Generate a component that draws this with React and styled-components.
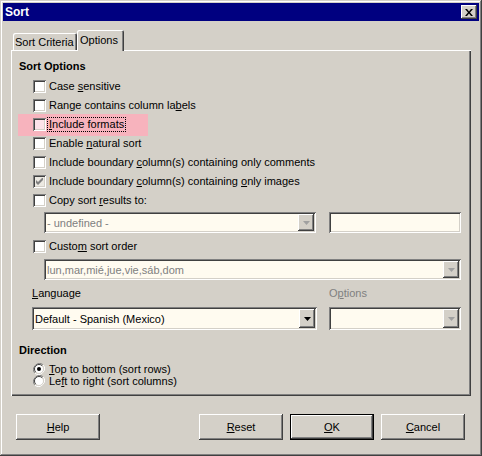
import React from "react";
import styled, { createGlobalStyle, css } from "styled-components";

const GlobalStyle = createGlobalStyle`
  body {
    margin: 0;
    background: #d4d0c8;
  }
  * {
    box-sizing: border-box;
  }
`;

const raised = css`
  box-shadow: inset -1px -1px #404040, inset 1px 1px #ffffff,
    inset -2px -2px #808080, inset 2px 2px #d4d0c8;
`;

const sunken = css`
  box-shadow: inset 1px 1px #808080, inset -1px -1px #ffffff,
    inset 2px 2px #404040, inset -2px -2px #d4d0c8;
`;

const Window = styled.div`
  width: 482px;
  height: 456px;
  padding: 3px;
  background: #d4d0c8;
  font-family: "Liberation Sans", Arial, sans-serif;
  font-size: 11px;
  color: #000;
  box-shadow: inset -1px -1px #404040, inset 1px 1px #d4d0c8,
    inset -2px -2px #808080, inset 2px 2px #ffffff;
  display: flex;
  flex-direction: column;
`;

const TitleBar = styled.div`
  height: 18px;
  background: #000080;
  display: flex;
  align-items: center;
  justify-content: space-between;
  padding: 0 2px 0 2px;
  color: #fff;
  font-weight: bold;
  font-size: 12px;
`;

const CloseButton = styled.div`
  width: 16px;
  height: 14px;
  background: #d4d0c8;
  display: flex;
  align-items: center;
  justify-content: center;
  ${raised}
`;

const Body = styled.div`
  padding: 0 8px;
  display: flex;
  flex-direction: column;
`;

const TabStrip = styled.div`
  margin-top: 9px;
  height: 20px;
  padding-left: 2px;
  display: flex;
  align-items: flex-end;
  position: relative;
  z-index: 1;
`;

const Tab = styled.div`
  height: ${(p) => (p.$active ? "21px" : "17px")};
  margin-bottom: ${(p) => (p.$active ? "-1px" : "0")};
  width: ${(p) => p.$w}px;
  background: #d4d0c8;
  border-radius: 2px 2px 0 0;
  display: flex;
  align-items: ${(p) => (p.$active ? "flex-start" : "center")};
  padding: ${(p) => (p.$active ? "4px 0 0 3px" : "0 0 0 2px")};
  box-shadow: inset 1px 1px #ffffff, inset -1px 0 #404040, inset -2px 0 #808080;
`;

const Panel = styled.div`
  height: 346px;
  padding: 10px 8px 0 8px;
  display: flex;
  flex-direction: column;
  box-shadow: inset 1px 1px #ffffff, inset -1px -1px #404040,
    inset -2px -2px #808080;
`;

const SectionTitle = styled.div`
  font-weight: bold;
  height: 13px;
  line-height: 13px;
  margin-top: ${(p) => p.$mt || 0}px;
`;

const CheckList = styled.div`
  margin-left: 14px;
  margin-top: 4px;
  display: flex;
  flex-direction: column;
`;

const CheckRow = styled.div`
  height: 19px;
  display: flex;
  align-items: center;
  gap: 3px;
  position: relative;
  margin-top: ${(p) => p.$mt || 0}px;

  ${(p) =>
    p.$highlight &&
    css`
      &::before {
        content: "";
        position: absolute;
        left: -15px;
        top: 0;
        width: 130px;
        height: 22px;
        margin-top: -1px;
        background: #f7b3bd;
        z-index: 0;
      }
    `}

  & > * {
    position: relative;
    z-index: 1;
  }
`;

const Box = styled.span`
  width: 13px;
  height: 13px;
  flex: none;
  background: ${(p) => p.$bg || "#ffffff"};
  display: flex;
  align-items: center;
  justify-content: center;
  ${sunken}
`;

const Label = styled.span`
  line-height: 13px;
  white-space: nowrap;
  color: ${(p) => (p.$disabled ? "#808080" : "#000")};
  ${(p) =>
    p.$focus &&
    css`
      outline: 1px dotted #000;
      outline-offset: 0;
      padding: 0 1px;
      margin-left: -1px;
    `}
`;

const U = styled.span`
  text-decoration: underline;
`;

const ControlRow = styled.div`
  display: flex;
  gap: ${(p) => p.$gap || 13}px;
  margin-left: ${(p) => p.$ml}px;
  margin-top: ${(p) => p.$mt}px;
`;

const Combo = styled.div`
  width: ${(p) => p.$w}px;
  height: ${(p) => p.$h}px;
  background: #fffbf0;
  display: flex;
  align-items: center;
  padding: 2px;
  ${sunken}
`;

const ComboText = styled.span`
  flex: 1;
  padding-left: 1px;
  white-space: nowrap;
  overflow: hidden;
  color: ${(p) => (p.$disabled ? "#808080" : "#000")};
`;

const ArrowButton = styled.span`
  width: 16px;
  align-self: stretch;
  background: #d4d0c8;
  display: flex;
  align-items: center;
  justify-content: center;
  ${raised}
`;

const TextField = styled.div`
  width: ${(p) => p.$w}px;
  height: ${(p) => p.$h}px;
  background: #fffbf0;
  ${sunken}
`;

const LabelRow = styled.div`
  display: flex;
  margin-left: 13px;
  margin-top: 7px;
  height: 13px;
  line-height: 13px;
`;

const FieldLabel = styled.span`
  width: ${(p) => p.$w}px;
  color: ${(p) => (p.$disabled ? "#808080" : "#000")};
`;

const RadioList = styled.div`
  margin-left: 14px;
  margin-top: 6px;
  display: flex;
  flex-direction: column;
`;

const RadioRow = styled.div`
  height: 12px;
  display: flex;
  align-items: center;
  gap: 4px;
  line-height: 12px;
`;

const ButtonRow = styled.div`
  margin-top: 18px;
  padding: 0 6px 0 5px;
  display: flex;
  justify-content: space-between;
`;

const ButtonGroup = styled.div`
  display: flex;
  gap: 7px;
`;

const Button = styled.button`
  width: 84px;
  height: 26px;
  padding: 0;
  border: none;
  background: #d4d0c8;
  font-family: "Liberation Sans", Arial, sans-serif;
  font-size: 11px;
  color: #000;
  ${(p) =>
    p.$default
      ? css`
          box-shadow: inset 0 0 0 1px #000, inset -2px -2px #404040,
            inset 2px 2px #ffffff, inset -3px -3px #808080;
        `
      : raised}
`;

const Arrow = ({ disabled }) => (
  <svg width="7" height="4" viewBox="0 0 7 4">
    <path d="M0 0h7L3.5 4z" fill={disabled ? "#a0a0a0" : "#000"} />
  </svg>
);

const Check = ({ checked, bg, disabled }) => (
  <Box $bg={bg}>
    {checked && (
      <svg width="7" height="7" viewBox="0 0 7 7">
        <path
          d="M0 2v3l2 2 5-5V-1L2 4z"
          fill={disabled ? "#808080" : "#000"}
        />
      </svg>
    )}
  </Box>
);

const Radio = ({ checked }) => (
  <svg width="12" height="12" viewBox="0 0 12 12">
    <path d="M10.2 1.8A6 6 0 0 0 1.8 10.2" fill="none" stroke="#808080" strokeWidth="1" />
    <path d="M1.8 10.2A6 6 0 0 0 10.2 1.8" fill="none" stroke="#ffffff" strokeWidth="1" />
    <circle cx="6" cy="6" r="4.5" fill="#ffffff" />
    <path d="M9.2 2.8A4.5 4.5 0 0 0 2.8 9.2" fill="none" stroke="#404040" strokeWidth="1" />
    <path d="M2.8 9.2A4.5 4.5 0 0 0 9.2 2.8" fill="none" stroke="#d4d0c8" strokeWidth="1" />
    {checked && <circle cx="6" cy="6" r="2" fill="#000" />}
  </svg>
);

const ComboBox = ({ w, h, text, disabled }) => (
  <Combo $w={w} $h={h}>
    <ComboText $disabled={disabled}>{text}</ComboText>
    <ArrowButton>
      <Arrow disabled={disabled} />
    </ArrowButton>
  </Combo>
);

export default function App() {
  return (
    <>
      <GlobalStyle />
      <Window>
        <TitleBar>
          <span style={{ marginLeft: 0 }}>Sort</span>
          <CloseButton>
            <svg width="8" height="7" viewBox="0 0 8 7">
              <path d="M0 0h2l2 2.5L6 0h2L5 3.5 8 7H6L4 4.5 2 7H0l3-3.5z" fill="#000" />
            </svg>
          </CloseButton>
        </TitleBar>
        <Body>
          <TabStrip>
            <Tab $w={64}>Sort Criteria</Tab>
            <Tab $w={47} $active>
              Options
            </Tab>
          </TabStrip>
          <Panel>
            <SectionTitle>Sort Options</SectionTitle>
            <CheckList>
              <CheckRow>
                <Check />
                <Label>
                  Case <U>s</U>ensitive
                </Label>
              </CheckRow>
              <CheckRow>
                <Check />
                <Label>
                  Range contains column la<U>b</U>els
                </Label>
              </CheckRow>
              <CheckRow $highlight>
                <Check bg="#fde3ea" />
                <Label $focus>
                  <U>I</U>nclude formats
                </Label>
              </CheckRow>
              <CheckRow>
                <Check />
                <Label>
                  Enable <U>n</U>atural sort
                </Label>
              </CheckRow>
              <CheckRow>
                <Check />
                <Label>
                  Include boundary <U>c</U>olumn(s) containing only comments
                </Label>
              </CheckRow>
              <CheckRow>
                <Check checked disabled bg="#ece9e2" />
                <Label>
                  Include boundary <U>c</U>olumn(s) containing <U>o</U>nly images
                </Label>
              </CheckRow>
              <CheckRow>
                <Check />
                <Label>
                  Copy sort <U>r</U>esults to:
                </Label>
              </CheckRow>
            </CheckList>
            <ControlRow $ml={25} $mt={2}>
              <ComboBox w={272} h={21} text="- undefined -" disabled />
              <TextField $w={132} $h={21} />
            </ControlRow>
            <CheckList style={{ marginTop: 4 }}>
              <CheckRow>
                <Check />
                <Label>
                  Custo<U>m</U> sort order
                </Label>
              </CheckRow>
            </CheckList>
            <ControlRow $ml={25} $mt={3}>
              <ComboBox w={417} h={21} text="lun,mar,mié,jue,vie,sáb,dom" disabled />
            </ControlRow>
            <LabelRow>
              <FieldLabel $w={297}>
                <U>L</U>anguage
              </FieldLabel>
              <FieldLabel $disabled>
                O<U>p</U>tions
              </FieldLabel>
            </LabelRow>
            <ControlRow $ml={13} $mt={7} $gap={12}>
              <ComboBox w={285} h={23} text="Default - Spanish (Mexico)" />
              <ComboBox w={132} h={23} text="" disabled />
            </ControlRow>
            <SectionTitle $mt={14}>Direction</SectionTitle>
            <RadioList>
              <RadioRow>
                <Radio checked />
                <Label>
                  <U>T</U>op to bottom (sort rows)
                </Label>
              </RadioRow>
              <RadioRow>
                <Radio />
                <Label>
                  Le<U>f</U>t to right (sort columns)
                </Label>
              </RadioRow>
            </RadioList>
          </Panel>
          <ButtonRow>
            <Button>
              <U>H</U>elp
            </Button>
            <ButtonGroup>
              <Button>
                <U>R</U>eset
              </Button>
              <Button $default>
                <U>O</U>K
              </Button>
              <Button>
                <U>C</U>ancel
              </Button>
            </ButtonGroup>
          </ButtonRow>
        </Body>
      </Window>
    </>
  );
}
